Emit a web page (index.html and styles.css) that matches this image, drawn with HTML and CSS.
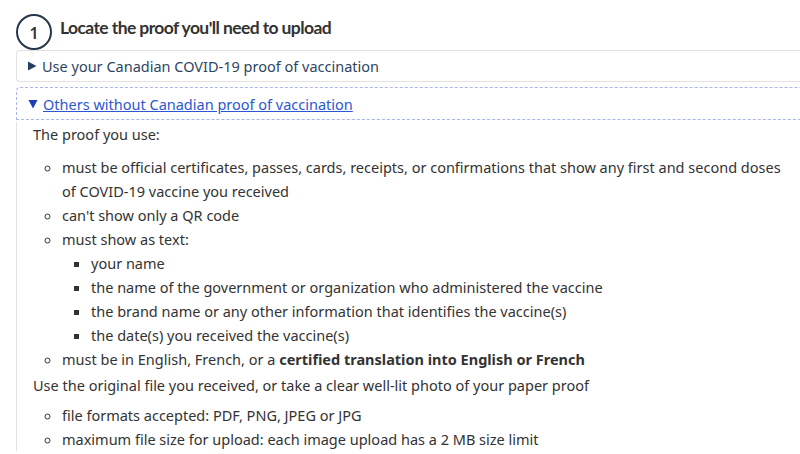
FILE: index.html
```html
<!DOCTYPE html>
<html lang="en">
<head>
<meta charset="utf-8">
<link rel="stylesheet" href="styles.css">
</head>
<body>
<div class="page">
  <div class="step">
    <span class="step-num">1</span>
    <h2 class="step-title">Locate the proof you'll need to upload</h2>
  </div>
  <div class="panel">
    <div class="det closed">
      <div class="summary"><svg class="arrow" width="10" height="10" viewBox="0 0 10 10"><polygon points="1,0.5 9.5,5 1,9.5" fill="#284162"/></svg><span class="sum-text">Use your Canadian COVID-19 proof of vaccination</span></div>
    </div>
    <div class="det open">
      <div class="summary focus"><svg class="arrow" width="10" height="10" viewBox="0 0 10 10"><polygon points="0.5,1 9.5,1 5,9.5" fill="#1c3fb3"/></svg><a class="sum-link" href="#">Others without Canadian proof of vaccination</a></div>
      <div class="det-body">
        <p class="lead">The proof you use:</p>
        <ul class="circle-list">
          <li>must be official certificates, passes, cards, receipts, or confirmations that show any first and second doses of COVID-19 vaccine you received</li>
          <li>can't show only a QR code</li>
          <li>must show as text:
            <ul class="square-list">
              <li>your name</li>
              <li>the name of the government or organization who administered the vaccine</li>
              <li>the brand name or any other information that identifies the vaccine(s)</li>
              <li>the date(s) you received the vaccine(s)</li>
            </ul>
          </li>
          <li>must be in English, French, or a <strong>certified translation into English or French</strong></li>
        </ul>
        <p class="lead lead-tight">Use the original file you received, or take a clear well-lit photo of your paper proof</p>
        <ul class="circle-list">
          <li>file formats accepted: PDF, PNG, JPEG or JPG</li>
          <li>maximum file size for upload: each image upload has a 2 MB size limit</li>
        </ul>
      </div>
    </div>
  </div>
</div>
</body>
</html>
```
FILE: styles.css
```css
html, body {
  margin: 0;
  padding: 0;
  background: #fff;
  overflow: hidden;
}
.page {
  width: 800px;
  height: 454px;
  overflow: hidden;
  padding-left: 16px;
  box-sizing: border-box;
  font-family: "Noto Sans", sans-serif;
  color: #333;
}
.step {
  display: flex;
  align-items: flex-start;
  height: 36px;
  margin-top: 14px;
}
.step-num {
  width: 32px;
  height: 30px;
  padding-top: 2px;
  box-sizing: content-box;
  border: 2px solid #26374a;
  border-radius: 50%;
  display: flex;
  align-items: center;
  justify-content: center;
  font-family: "Noto Sans", sans-serif;
  font-weight: 600;
  font-size: 16px;
  line-height: 1;
  color: #333;
  flex: none;
}
.step-title {
  margin: 3px 0 0 8px;
  font-family: Lato, sans-serif;
  font-weight: 700;
  font-size: 17.5px;
  line-height: 22px;
  letter-spacing: -0.6px;
  color: #333;
}
.panel {
  width: 820px;
}
.det {
  border: 1px solid #e2e2e2;
  border-right: none;
  border-radius: 4px 0 0 4px;
}
.det.closed {
  height: 30px;
}
.det.open {
  margin-top: 5px;
  border: none;
  border-radius: 0;
}
.summary {
  display: flex;
  align-items: center;
  height: 30px;
  padding-left: 10px;
  font-size: 14.5px;
}
.summary.focus {
  height: 31px;
  padding-left: 11px;
  border: 1px dashed #aab6e6;
  border-right: none;
  border-radius: 4px 0 0 0;
}
.arrow {
  flex: none;
  margin-right: 5px;
}
.sum-text {
  color: #2e4562;
}
.sum-link {
  color: #2b57d3;
  text-decoration: underline;
}
.det-body {
  border-left: 1px solid #e2e2e2;
  padding: 0 0 0 16px;
  font-size: 14.5px;
  line-height: 24px;
  width: 760px;
}
.lead {
  margin: 2px 0 9px 0;
}
.lead-tight {
  margin-top: 1px;
  margin-bottom: 6px;
}
.circle-list {
  list-style: circle;
  margin: 0 0 2px 0;
  padding-left: 29px;
}
.square-list {
  list-style: square;
  margin: 0;
  padding-left: 29px;
}
```
